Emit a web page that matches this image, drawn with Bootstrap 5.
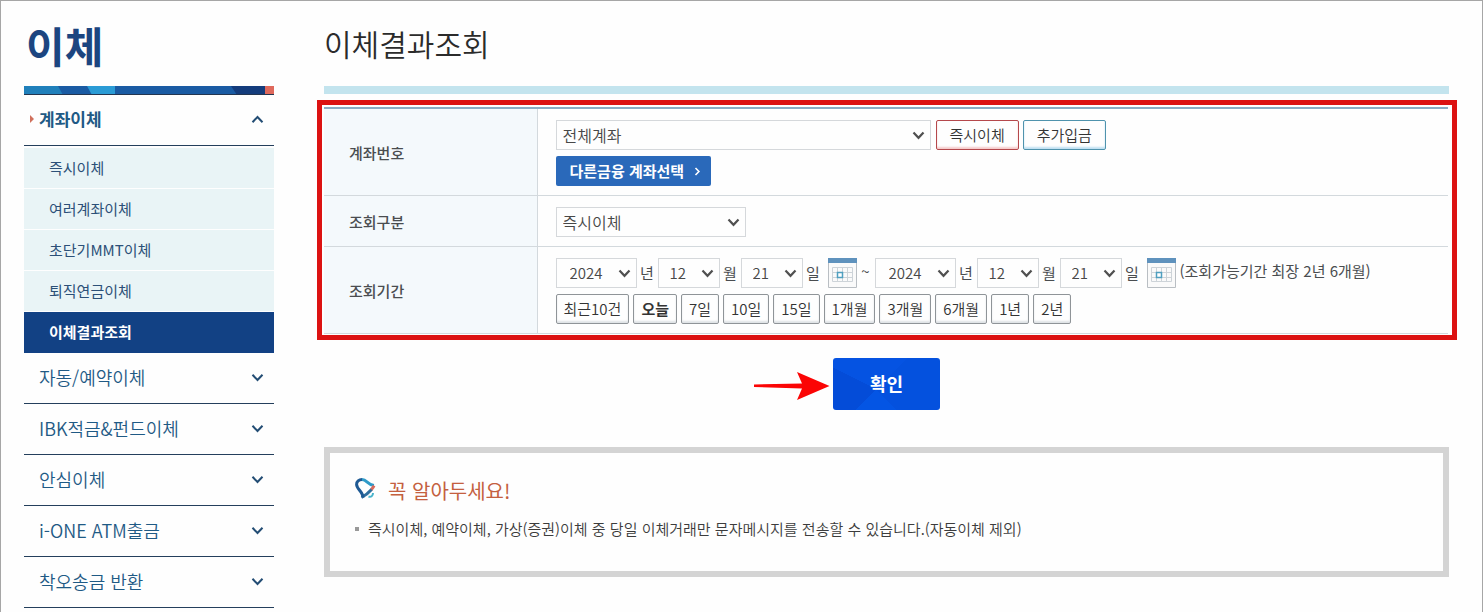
<!DOCTYPE html>
<html lang="ko">
<head>
<meta charset="utf-8">
<meta name="viewport" content="width=device-width, initial-scale=1">
<title>이체결과조회</title>
<link href="https://cdn.jsdelivr.net/npm/bootstrap@5.3.0/dist/css/bootstrap.min.css" rel="stylesheet">
<style>
  body { font-family: "Noto Sans CJK KR", sans-serif; font-size: 15px; line-height: 20px; color: #4a4d50; background: #fefefe; }
  .page { min-height: 100vh; border: 1px solid #a6a6a6; padding: 0 33px 4px 23px; gap: 50px; }
  .side { width: 250px; }
  .side-title { height: 85px; padding: 20px 0 0 2px; font-size: 42px; line-height: 48px; font-weight: 700; color: #1c4580; }
  .stripe { display: block; width: 100%; height: 9px; }
  .menu-link { height: 51px; padding: 0 10px 2px 15px; font-size: 18px; line-height: 24px; font-weight: 350; color: #1f5a85; border-bottom: 1px solid #243f5c; }
  .menu-link.opened { font-size: 17px; font-weight: 700; position: relative; }
  .menu-link.opened::before { content: ""; position: absolute; left: 6px; top: 20px; border: 4px solid transparent; border-left-color: #d0705c; border-right: 0; }
  .submenu { padding-top: 2px; }
  .sub-link { height: 41px; padding-left: 25px; color: #2c5078; background: #e9f4f6; border-bottom: 1px solid #fefefe; }
  .sub-link.current { background: #124184; color: #fff; font-weight: 700; border-color: #124184; }
  .main-col { min-width: 0; }
  .page-title { height: 85px; padding-top: 22px; font-size: 30px; line-height: 40px; font-weight: 350; color: #2b2b2b; border: 0; }
  .title-bar { height: 8px; background: #c3e4ee; }
  .marked { margin: 6px -8px 0 -7px; padding: 2px 4px 1px 2px; border: 5px solid #dc1212; }
  .query { border-top: 2px solid #8cabc4; }
  .query th, .query td { border-bottom: 1px solid #d3d9dd; vertical-align: middle; }
  .query th { width: 213px; padding: 1px 25px 0; font-weight: 500; background: #f4f9fc; border-right: 1px solid #d3d9dd; color: #4a4d50; }
  .query td { padding: 11px 18px 9px; }
  .pick { width: auto; height: 30px; padding: 0 24px 0 6px; font-size: 16px; line-height: 26px; font-weight: 350; color: #484848; border: 1px solid #d5d8db; border-radius: 0; background-color: #fefefe; background-position: right 5px center; background-size: 13px 9px;
    background-image: url("data:image/svg+xml,%3Csvg xmlns='http://www.w3.org/2000/svg' viewBox='0 0 13 9'%3E%3Cpath d='M1.5 1.5 6.5 6.8 11.5 1.5' fill='none' stroke='%23505050' stroke-width='2.2'/%3E%3C/svg%3E"); }
  .pick-account { width: 375px; }
  .pick-kind { width: 190px; }
  .pick-year { width: 81px; padding-left: 13px; font-size: 15px; }
  .pick-day { width: 62px; padding-left: 11px; font-size: 15px; }
  .unit { width: 21px; text-align: center; }
  .tilde { width: 18px; text-align: center; }
  .rows { gap: 6px; }
  .tight { gap: 4px; }
  .small-btn { height: 30px; padding: 0 7px; font-size: 15px; line-height: 26px; font-weight: 350; color: #333; border: 1px solid #8f9498; border-radius: 2px; background: #fefefe; box-shadow: inset 0 -2px 2px #dfe3e6; }
  .act-btn { padding: 0 13px; }
  .act-red { margin-left: 1px; border-color: #b5484c; box-shadow: inset 0 -2px 2px #f5cccc; }
  .act-blue { border-color: #4f93ad; box-shadow: inset 0 -2px 2px #bfe0f2; }
  .other-btn { height: 30px; padding: 0 10px 0 14px; gap: 10px; font-size: 15px; line-height: 28px; font-weight: 700; color: #fff; background: #2a69ba; border: 0; border-radius: 2px; }
  .confirm-btn { width: 107px; height: 52px; padding: 0 0 2px; font-size: 18px; font-weight: 700; color: #fff; border: 0; border-radius: 3px;
    background: conic-gradient(from 45deg at 40% 60%, #0451de 25%, #0455e4 0 50%, #044cd8 0 70%, #0553e2 0); }
  .confirm-row { margin: 18px 0 37px; }
  .pointer { position: absolute; right: 100%; top: 13px; margin-right: 3px; }
  .notice { border: 6px solid #d4d4d4; padding: 23px 25px 32px; }
  .notice-title { font-size: 20px; line-height: 30px; font-weight: 400; color: #c4603f; gap: 12px; }
  .notice-title svg { margin-bottom: 4px; }
  .notice-list { padding-top: 13px; }
  .notice-list li { gap: 9px; font-weight: 350; color: #3c3c3c; }
  .bullet { width: 4px; height: 4px; background: #999; }
</style>
</head>
<body>
<div class="page d-flex">
  <nav class="side flex-shrink-0" aria-label="이체 메뉴">
    <h2 class="side-title m-0">이체</h2>
    <svg class="stripe" viewBox="0 0 250 9" preserveAspectRatio="none" aria-hidden="true">
      <path fill="#1a5ba3" d="M0 0h250v9H0z"/><path fill="#2080bb" d="M0 0h34l5 9H0z"/><path fill="#2a9bd5" d="M63 0h28v9H68z"/><path fill="#143c7c" d="M207 0h34v9h-28z"/><path fill="#df695c" d="M241 0h9v9h-9z"/><path fill="#24354f" d="M0 8h250v1H0z"/>
    </svg>
    <a href="#" class="menu-link opened d-flex align-items-center justify-content-between text-decoration-none">계좌이체<svg width="13" height="9" viewBox="0 0 13 9" fill="none" stroke="#234d74" stroke-width="2"><path d="M1.5 7.2 6.5 2l5 5.2"/></svg></a>
    <ul class="submenu list-unstyled m-0">
      <li><a href="#" class="sub-link d-flex align-items-center text-decoration-none">즉시이체</a></li>
      <li><a href="#" class="sub-link d-flex align-items-center text-decoration-none">여러계좌이체</a></li>
      <li><a href="#" class="sub-link d-flex align-items-center text-decoration-none">초단기MMT이체</a></li>
      <li><a href="#" class="sub-link d-flex align-items-center text-decoration-none">퇴직연금이체</a></li>
      <li><a href="#" class="sub-link current d-flex align-items-center text-decoration-none" aria-current="page">이체결과조회</a></li>
    </ul>
    <a href="#" class="menu-link d-flex align-items-center justify-content-between text-decoration-none">자동/예약이체<svg width="13" height="9" viewBox="0 0 13 9" fill="none" stroke="#234d74" stroke-width="2"><path d="M1.5 1.8 6.5 7l5-5.2"/></svg></a>
    <a href="#" class="menu-link d-flex align-items-center justify-content-between text-decoration-none">IBK적금&amp;펀드이체<svg width="13" height="9" viewBox="0 0 13 9" fill="none" stroke="#234d74" stroke-width="2"><path d="M1.5 1.8 6.5 7l5-5.2"/></svg></a>
    <a href="#" class="menu-link d-flex align-items-center justify-content-between text-decoration-none">안심이체<svg width="13" height="9" viewBox="0 0 13 9" fill="none" stroke="#234d74" stroke-width="2"><path d="M1.5 1.8 6.5 7l5-5.2"/></svg></a>
    <a href="#" class="menu-link d-flex align-items-center justify-content-between text-decoration-none">i-ONE ATM출금<svg width="13" height="9" viewBox="0 0 13 9" fill="none" stroke="#234d74" stroke-width="2"><path d="M1.5 1.8 6.5 7l5-5.2"/></svg></a>
    <a href="#" class="menu-link d-flex align-items-center justify-content-between text-decoration-none">착오송금 반환<svg width="13" height="9" viewBox="0 0 13 9" fill="none" stroke="#234d74" stroke-width="2"><path d="M1.5 1.8 6.5 7l5-5.2"/></svg></a>
  </nav>

  <main class="main-col flex-grow-1">
    <h1 class="page-title m-0">이체결과조회</h1>
    <div class="title-bar"></div>
    <form onsubmit="return false">
      <div class="marked">
        <table class="query w-100">
          <tbody>
            <tr>
              <th scope="row"><label for="account">계좌번호</label></th>
              <td>
                <div class="rows d-flex flex-column align-items-start">
                  <div class="tight d-flex">
                    <select id="account" class="pick pick-account form-select"><option>전체계좌</option></select>
                    <button type="button" class="small-btn act-btn act-red btn">즉시이체</button>
                    <button type="button" class="small-btn act-btn act-blue btn">추가입금</button>
                  </div>
                  <button type="button" class="other-btn btn d-flex align-items-center">다른금융 계좌선택<svg width="7" height="9" viewBox="0 0 7 9" fill="none" stroke="#fff" stroke-width="1.6"><path d="m1.5 1 3.4 3.5L1.5 8"/></svg></button>
                </div>
              </td>
            </tr>
            <tr>
              <th scope="row"><label for="kind">조회구분</label></th>
              <td><select id="kind" class="pick pick-kind form-select"><option>즉시이체</option></select></td>
            </tr>
            <tr>
              <th scope="row">조회기간</th>
              <td>
                <div class="rows d-flex flex-column">
                  <div class="d-flex align-items-center">
                    <select id="y1" class="pick pick-year form-select"><option>2024</option></select><label for="y1" class="unit">년</label>
                    <select id="m1" class="pick pick-day form-select"><option>12</option></select><label for="m1" class="unit">월</label>
                    <select id="d1" class="pick pick-day form-select"><option>21</option></select><label for="d1" class="unit me-1">일</label>
                    <button type="button" class="btn p-0 border-0 d-flex" aria-label="시작일 달력">
                      <svg width="29" height="30" viewBox="0 0 29 30"><path fill="#fafafa" stroke="#b9bec3" d="M.5.5h28v29H.5z"/><path fill="#5f92bd" d="M0 0h29v5H0z"/><path fill="none" stroke="#cdd3d8" d="M4.500 9.500h20v14h-20zM9.500 9v15M14.500 9v15M19.500 9v15M4 14.500h21M4 19.500h21"/><path fill="#fff" stroke="#4f9fc0" stroke-width="1.500" d="M9.500 14.500h5v5h-5z"/></svg></button>
                    <span class="tilde pb-1">~</span>
                    <select id="y2" class="pick pick-year form-select"><option>2024</option></select><label for="y2" class="unit">년</label>
                    <select id="m2" class="pick pick-day form-select"><option>12</option></select><label for="m2" class="unit">월</label>
                    <select id="d2" class="pick pick-day form-select"><option>21</option></select><label for="d2" class="unit me-1">일</label>
                    <button type="button" class="btn p-0 border-0 d-flex" aria-label="종료일 달력">
                      <svg width="29" height="30" viewBox="0 0 29 30"><path fill="#fafafa" stroke="#b9bec3" d="M.5.5h28v29H.5z"/><path fill="#5f92bd" d="M0 0h29v5H0z"/><path fill="none" stroke="#cdd3d8" d="M4.500 9.500h20v14h-20zM9.500 9v15M14.500 9v15M19.500 9v15M4 14.500h21M4 19.500h21"/><path fill="#fff" stroke="#4f9fc0" stroke-width="1.500" d="M9.500 14.500h5v5h-5z"/></svg></button>
                    <span class="ms-1 pb-1">(조회가능기간 최장 2년 6개월)</span>
                  </div>
                  <div class="tight d-flex">
                    <button type="button" class="small-btn btn">최근10건</button>
                    <button type="button" class="small-btn btn fw-bold">오늘</button>
                    <button type="button" class="small-btn btn">7일</button>
                    <button type="button" class="small-btn btn">10일</button>
                    <button type="button" class="small-btn btn">15일</button>
                    <button type="button" class="small-btn btn">1개월</button>
                    <button type="button" class="small-btn btn">3개월</button>
                    <button type="button" class="small-btn btn">6개월</button>
                    <button type="button" class="small-btn btn">1년</button>
                    <button type="button" class="small-btn btn">2년</button>
                  </div>
                </div>
              </td>
            </tr>
          </tbody>
        </table>
      </div>
      <div class="confirm-row d-flex justify-content-center">
        <div class="position-relative">
          <svg class="pointer" width="76" height="30" viewBox="0 0 76 30" aria-hidden="true"><path fill="#fb0505" d="m0 13.500 48-1L43 1l32.500 14L43 29l5-11.500-48-1.500z"/></svg>
          <button type="submit" class="confirm-btn btn">확인</button>
        </div>
      </div>
    </form>
    <section class="notice">
      <h2 class="notice-title d-flex align-items-center m-0">
        <svg width="21" height="22" viewBox="0 0 21 22" fill="none" stroke-width="3" stroke-linejoin="round" aria-hidden="true"><path stroke="#2f9ac8" d="M7 1.600c5 0 5.500 5.500 12 6"/><path stroke="#d86a5c" d="M19 7.600c-.8 2-1.800 3-3 4.400"/><path stroke="#2f6f9e" d="M6.500 19.500c4-2 6.500-4 10-8"/><path stroke="#48b4cc" stroke-width="2" d="M13.500 18.500c2.500 1 4.500-.5 4.500-3.500"/><path stroke="#1f5a94" d="M8 19.500C8 14 1.700 11 1.600 6.500 1.500 3.500 4 1.600 7 1.600"/></svg>
        꼭 알아두세요!
      </h2>
      <ul class="notice-list list-unstyled m-0">
        <li class="d-flex align-items-center"><span class="bullet"></span>즉시이체, 예약이체, 가상(증권)이체 중 당일 이체거래만 문자메시지를 전송할 수 있습니다.(자동이체 제외)</li>
      </ul>
    </section>
  </main>
</div>
<script src="https://cdn.jsdelivr.net/npm/bootstrap@5.3.0/dist/js/bootstrap.bundle.min.js"></script>
</body>
</html>
